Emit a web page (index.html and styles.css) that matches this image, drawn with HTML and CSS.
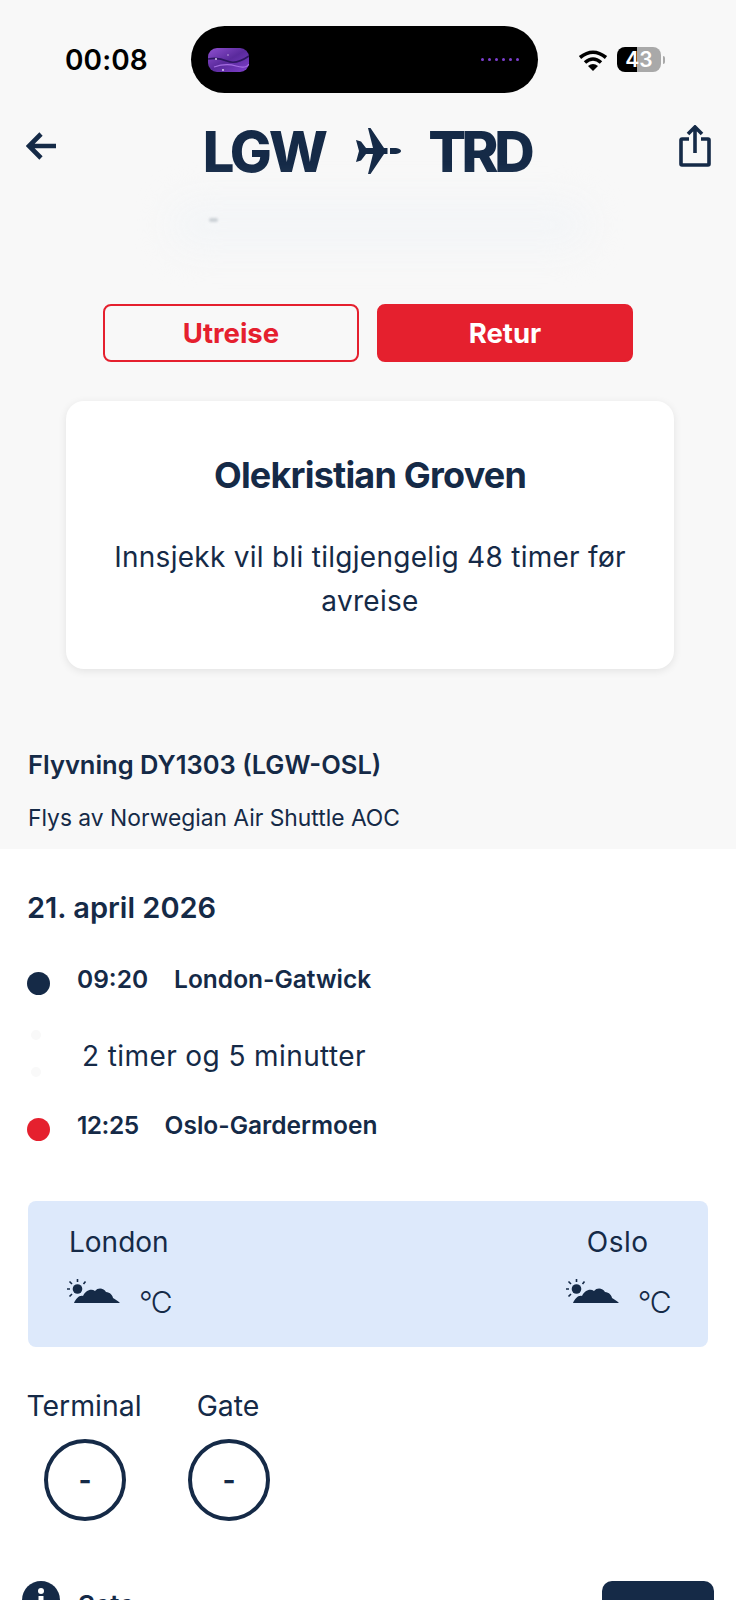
FILE: index.html
```html
<!DOCTYPE html>
<html lang="no">

<head>
    <meta charset="UTF-8">
    <meta name="viewport" content="width=device-width, initial-scale=1.0">
    <title>LGW - TRD</title>
    <link rel="stylesheet" href="styles.css">
</head>

<body>
    <div class="page">
        <div class="top">
            <div class="status">
                <span class="clock">00:08</span>
                <div class="island">
                    <svg class="art" viewBox="0 0 41 24">
                        <defs>
                            <linearGradient id="artFill" x1="0" y1="0" x2="1" y2="1">
                                <stop offset="0" stop-color="#8f50d0" />
                                <stop offset="0.5" stop-color="#5a2a9c" />
                                <stop offset="1" stop-color="#7f40cc" />
                            </linearGradient>
                        </defs>
                        <rect width="41" height="24" rx="9" fill="url(#artFill)" />
                        <path d="M0 11 Q10 9 19 13 T41 8" stroke="#2c1560" stroke-width="1.6" fill="none" />
                        <path d="M6 19 Q18 15 28 18 T41 16" stroke="#a56ee2" stroke-width="1.2" fill="none" />
                        <circle cx="8" cy="11" r="0.9" fill="#e8dcf8" />
                        <circle cx="15" cy="22" r="0.9" fill="#e8dcf8" />
                        <circle cx="20" cy="7" r="0.7" fill="#d9c6f2" />
                    </svg>
                    <div class="beats">
                        <i></i><i></i><i></i><i></i><i></i><i></i>
                    </div>
                </div>
                <div class="sysicons">
                    <svg class="wifi" viewBox="0 0 30 22">
                        <path d="M2 8.5 Q15 -2 28 8.5" stroke="#000" stroke-width="3.6" fill="none" />
                        <path d="M7 13.5 Q15 6.5 23 13.5" stroke="#000" stroke-width="3.6" fill="none" />
                        <path d="M15 22 L10 17 Q15 13 20 17 Z" fill="#000" />
                    </svg>
                    <div class="battery"><span>43</span></div>
                    <div class="nub"></div>
                </div>
            </div>

            <div class="header">
                <svg class="back" viewBox="0 0 32 30">
                    <path d="M30 15 H4 M15 3 L3 15 L15 27" stroke="#152a47" stroke-width="4.6" fill="none" />
                </svg>
                <h1 class="route-title">
                    <span>LGW</span>
                    <svg class="plane" viewBox="0 0 46 46">
                        <path d="M12 0 h2.5 L28 20 h3.5 v6 H28 L14.5 46 H12 L17 26 H10 L5 32.5 L0 34 L3 23 L0 12 L5 13.5 L10 20 H17 Z" fill="#152a47" />
                        <path d="M34 20 h6 q5 1 5 3 t-5 3 h-6 z" fill="#152a47" />
                    </svg>
                    <span class="to">TRD</span>
                </h1>
                <svg class="share" viewBox="0 0 32 42">
                    <path d="M10 14 H3 Q2 14 2 15 V39 Q2 40 3 40 H29 Q30 40 30 39 V15 Q30 14 29 14 H22" stroke="#152a47" stroke-width="3.6" fill="none" />
                    <path d="M16 28 V3 M9 9 L16 2 L23 9" stroke="#152a47" stroke-width="3.6" fill="none" />
                </svg>
            </div>

            <div class="smudge"><i></i><b></b></div>

            <div class="tabs">
                <div class="tab">Utreise</div>
                <div class="tab active">Retur</div>
            </div>

            <div class="card">
                <h2>Olekristian Groven</h2>
                <p>Innsjekk vil bli tilgjengelig 48 timer før avreise</p>
            </div>

            <div class="flight">
                <h3>Flyvning DY1303 (LGW-OSL)</h3>
                <p>Flys av Norwegian Air Shuttle AOC</p>
            </div>
        </div>

        <div class="details">
            <h2 class="date">21. april 2026</h2>

            <div class="stop first">
                <span class="dot"></span>
                <span class="time">09:20</span>
                <span class="place">London-Gatwick</span>
            </div>
            <div class="duration">
                <div class="faint"><i></i><i></i></div>
                <span>2 timer og 5 minutter</span>
            </div>
            <div class="stop second">
                <span class="dot red"></span>
                <span class="time">12:25</span>
                <span class="place">Oslo-Gardermoen</span>
            </div>

            <div class="weather">
                <div class="city">
                    <div class="city-name">London</div>
                    <div class="temp">
                        <svg class="cloud" viewBox="0 0 54 26">
                            <use href="#sunCloud" />
                        </svg>
                        <span>°C</span>
                    </div>
                </div>
                <div class="city right">
                    <div class="city-name">Oslo</div>
                    <div class="temp">
                        <svg class="cloud" viewBox="0 0 54 26">
                            <defs>
                                <g id="sunCloud" fill="#152a47">
                                    <circle cx="11.5" cy="11" r="4.8" />
                                    <path d="M11.5 1 V4 M3.5 3.5 L6 6 M19.5 3.5 L17.5 6 M1 11 H4 M3.5 18.5 L6 16" stroke="#152a47" stroke-width="1.6" />
                                    <path d="M8 25 C10 21 13 17 17 18 C19 13 25 10 29 13 C32 9 38 10 40 14 C44 14 47 18 47 20 C49 21 52 23 54 25 Z" />
                                </g>
                            </defs>
                            <use href="#sunCloud" />
                        </svg>
                        <span>°C</span>
                    </div>
                </div>
            </div>

            <div class="gates">
                <div class="gate">
                    <div class="gate-label">Terminal</div>
                    <div class="ring">-</div>
                </div>
                <div class="gate">
                    <div class="gate-label">Gate</div>
                    <div class="ring">-</div>
                </div>
            </div>

            <div class="seat">
                <div class="seat-left">
                    <svg class="info" viewBox="0 0 38 38">
                        <circle cx="19" cy="19" r="19" fill="#152a47" />
                        <circle cx="19" cy="10" r="3" fill="#fff" />
                        <rect x="16.5" y="15" width="5" height="15" fill="#fff" />
                    </svg>
                    <span>Sete</span>
                </div>
                <div class="seat-btn"></div>
            </div>
        </div>
    </div>
</body>

</html>
```

FILE: styles.css
```css
* {
    box-sizing: border-box;
}

body {
    margin: 0;
    background-color: #fff;
    color: #152a47;
    font-family: "Inter", "Liberation Sans", sans-serif;
}

h1,
h2,
h3,
p {
    margin: 0;
}

.page {
    width: 736px;
    height: 1600px;
    overflow: hidden;
}

.top {
    height: 849px;
    background-color: #f8f8f8;
    padding-top: 26px;
}

/* status bar */
.status {
    display: flex;
    align-items: center;
    height: 67px;
}

.clock {
    width: 191px;
    padding-left: 65px;
    color: #000;
    font-size: 28px;
    font-weight: 600;
    letter-spacing: 0.1px;
}

.island {
    width: 347px;
    height: 67px;
    background-color: #000;
    border-radius: 34px;
    display: flex;
    align-items: center;
    justify-content: space-between;
    padding: 0 19px 0 17px;
}

.art {
    width: 41px;
    height: 24px;
}

.beats {
    display: flex;
    gap: 4px;
}

.beats i {
    width: 3px;
    height: 3px;
    border-radius: 50%;
    background-color: #7d3fd0;
}

.sysicons {
    display: flex;
    align-items: center;
    padding-left: 40px;
}

.wifi {
    width: 30px;
    height: 22px;
}

.battery {
    width: 44px;
    height: 25px;
    margin-left: 9px;
    border-radius: 8px;
    background: linear-gradient(90deg, #000 0 46%, #a9a9a9 46% 100%);
    color: #fff;
    font-size: 21px;
    font-weight: 600;
    line-height: 25px;
    text-align: center;
}

.nub {
    width: 2px;
    height: 8px;
    margin-left: 2px;
    border-radius: 0 2px 2px 0;
    background-color: #a9a9a9;
}

/* header */
.header {
    display: flex;
    align-items: center;
    justify-content: space-between;
    padding: 31px 26px 0 26px;
    height: 81px;
}

.back {
    width: 32px;
    height: 30px;
    margin-top: -6px;
}

.route-title {
    display: flex;
    align-items: center;
    font-size: 56px;
    font-weight: 800;
    letter-spacing: -3px;
    line-height: 50px;
    margin-top: 6px;
    margin-right: 4px;
}

.route-title .to {
    letter-spacing: -4.4px;
}

.plane {
    width: 46px;
    height: 46px;
    margin: -3px 26px 0 31px;
}

.share {
    width: 32px;
    height: 42px;
    margin-top: -6px;
    margin-right: -1px;
}

/* washed out strip under the title */
.smudge {
    height: 130px;
    position: relative;
}

.smudge i {
    position: absolute;
    left: 170px;
    top: 26px;
    width: 420px;
    height: 50px;
    background-color: #f3f5f7;
    border-radius: 30px;
    filter: blur(16px);
}

.smudge b {
    position: absolute;
    left: 209px;
    top: 44px;
    width: 9px;
    height: 4px;
    background-color: #ccd1d6;
    border-radius: 3px;
    filter: blur(1px);
}

.tabs {
    display: flex;
    justify-content: center;
    gap: 18px;
}

.tab {
    width: 256px;
    height: 58px;
    border: 2px solid #e5202e;
    border-radius: 8px;
    color: #e5202e;
    font-size: 27.5px;
    font-weight: 700;
    line-height: 54px;
    text-align: center;
}

.tab.active {
    background-color: #e5202e;
    color: #fff;
}

.card {
    width: 608px;
    height: 268px;
    margin: 39px 0 0 66px;
    padding: 52px 40px 0;
    background-color: #fff;
    border-radius: 18px;
    box-shadow: 0 2px 8px rgba(0, 0, 0, 0.09);
    text-align: center;
}

.card h2 {
    font-size: 36px;
    font-weight: 700;
    letter-spacing: -0.8px;
    line-height: 44px;
}

.card p {
    margin-top: 38px;
    font-size: 28px;
    line-height: 44px;
    letter-spacing: 0.28px;
}

.flight {
    padding: 78px 28px 0;
}

.flight h3 {
    font-size: 25.5px;
    font-weight: 600;
    line-height: 36px;
}

.flight p {
    margin-top: 20px;
    font-size: 22.8px;
    line-height: 30px;
}

/* white part */
.details {
    padding: 40px 28px 0;
}

.date {
    font-size: 29px;
    font-weight: 600;
    line-height: 38px;
    margin-left: -1px;
}

.stop {
    display: flex;
    align-items: center;
    font-size: 24.5px;
    font-weight: 600;
    line-height: 34px;
}

.stop.first {
    margin-top: 35px;
}

.dot {
    width: 23px;
    height: 23px;
    margin-top: 9px;
    margin-left: -1px;
    border-radius: 50%;
    background-color: #152a47;
}

.dot.red {
    background-color: #e5202e;
}

.time {
    margin-left: 27px;
}

.place {
    margin-left: 26px;
}

.stop.second .time {
    letter-spacing: -0.5px;
}

.duration {
    display: flex;
    align-items: center;
    height: 110px;
    margin-top: 2px;
    font-size: 28px;
    letter-spacing: 0.4px;
}

.duration span {
    padding-top: 6px;
}

.faint {
    display: flex;
    flex-direction: column;
    gap: 27px;
    width: 54px;
    padding-left: 3px;
}

.faint i {
    width: 10px;
    height: 10px;
    border-radius: 50%;
    background-color: #f9f9f9;
}

.weather {
    display: flex;
    justify-content: space-between;
    height: 146px;
    margin-top: 59px;
    padding: 24px 38px 0 38px;
    background-color: #dde9fb;
    border-radius: 8px;
}

.city-name {
    padding-left: 3px;
    font-size: 28px;
    line-height: 34px;
}

.city.right .city-name {
    padding-left: 22px;
    letter-spacing: 0.5px;
}

.temp {
    display: flex;
    align-items: flex-start;
    margin-top: 19px;
    font-size: 30px;
    font-weight: 300;
    line-height: 34px;
}

.temp span {
    margin-top: 7px;
    margin-left: 19px;
    letter-spacing: -1.5px;
}

.cloud {
    width: 54px;
    height: 26px;
}

.gates {
    display: flex;
    margin-top: 41px;
    margin-left: -1px;
}

.gate {
    display: flex;
    flex-direction: column;
    align-items: center;
    width: 114px;
    margin-right: 30px;
}

.gate-label {
    font-size: 28.4px;
    line-height: 36px;
    white-space: nowrap;
}

.ring {
    width: 82px;
    height: 82px;
    margin-top: 15px;
    margin-left: 2px;
    border: 4px solid #152a47;
    border-radius: 50%;
    font-size: 28px;
    font-weight: 700;
    line-height: 74px;
    text-align: center;
}

.seat {
    display: flex;
    justify-content: space-between;
    margin: 60px -6px 0 -6px;
}

.seat-left {
    display: flex;
    align-items: flex-start;
    font-size: 26px;
    font-weight: 600;
}

.seat-left span {
    margin-left: 18px;
    margin-top: 8px;
}

.info {
    width: 38px;
    height: 38px;
}

.seat-btn {
    width: 112px;
    height: 60px;
    border-radius: 10px;
    background-color: #152a47;
}
```
